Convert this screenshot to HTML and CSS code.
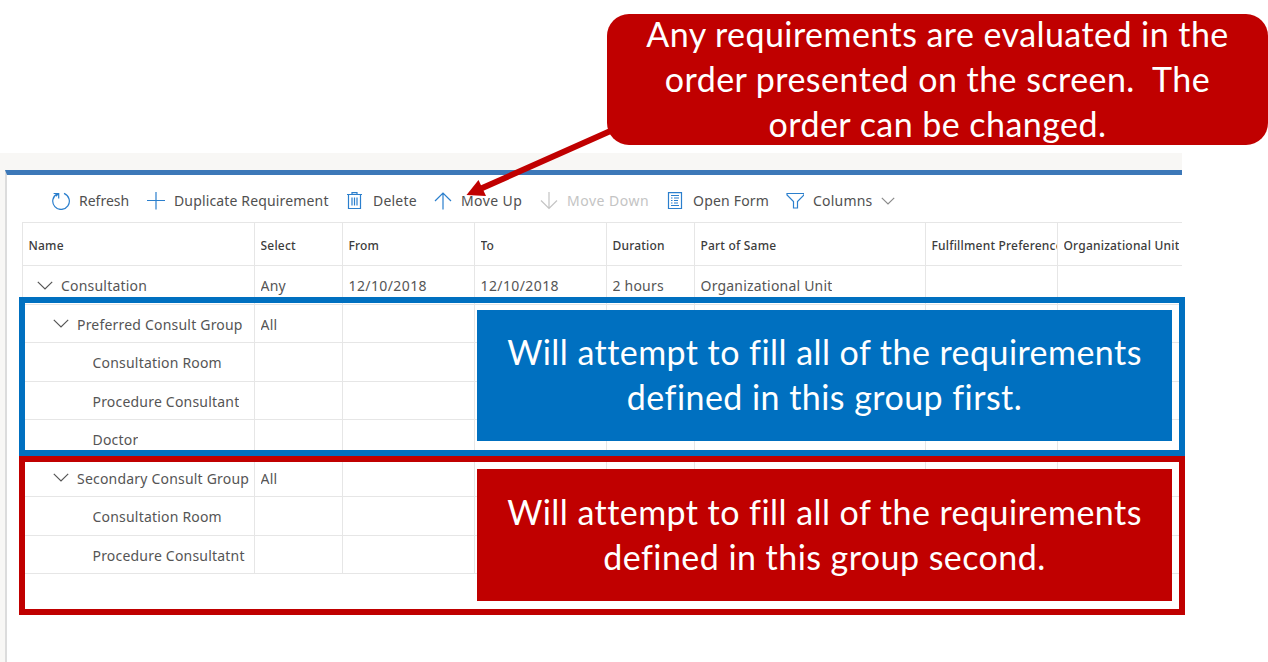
FILE: index.html
```
<!DOCTYPE html>
<html lang="en">
<head>
<meta charset="utf-8">
<title>Requirements</title>
<link rel="stylesheet" href="styles.css">
</head>
<body>
<div class="app">
  <main class="panel">
    <div class="toolbar">
      <div class="cmd cmd-refresh">
        <svg class="icon" viewBox="0 0 18 18"><path d="M12 1.4A8.3 8.3 0 1 1 5.2 1.8M1.6 1.5H6.7V6.4M6.7 1.5L3.8 4.2"/></svg>
        <span>Refresh</span>
      </div>
      <div class="cmd cmd-duplicate">
        <svg class="icon" viewBox="0 0 18 18"><path d="M0 8.500H18M9 0V17.500"/></svg>
        <span>Duplicate Requirement</span>
      </div>
      <div class="cmd cmd-delete">
        <svg class="icon" viewBox="0 0 18 18"><path d="M1 2.500H16M6 2.500V.6H11V2.500M2.500 2.500V16.500H14.500V2.500M6 5.500V13.500M8.500 5.500V13.500M11 5.500V13.500"/></svg>
        <span>Delete</span>
      </div>
      <div class="cmd cmd-up">
        <svg class="icon" viewBox="0 0 18 18"><path d="M9 17.500V1M1 9L9 1L17 9"/></svg>
        <span>Move Up</span>
      </div>
      <div class="cmd cmd-down disabled">
        <svg class="icon" viewBox="0 0 18 18"><path d="M9 0V16.500M1 8.500L9 16.500L17 8.500"/></svg>
        <span>Move Down</span>
      </div>
      <div class="cmd cmd-form">
        <svg class="icon" viewBox="0 0 18 18"><path d="M2.500 .6H15.500V16.500H2.500ZM5 3.500H13M5 6H6.500M8 6H13M5 8.500H6.500M8 8.500H12M5 11H6.500M8 11H12M5 13.500H13"/></svg>
        <span>Open Form</span>
      </div>
      <div class="cmd">
        <svg class="icon" viewBox="0 0 18 18"><path d="M1 1.500H18V3L11.500 9.500V16H7.500V9.500L1 3Z"/></svg>
        <span>Columns</span>
        <svg class="caret" viewBox="0 0 14 8"><path d="M.8 .8L7 7L13.200 .8"/></svg>
      </div>
    </div>

    <div class="grid">
      <div class="row head">
        <div><span>Name</span></div><div><span>Select</span></div><div><span>From</span></div><div><span>To</span></div><div><span>Duration</span></div><div><span>Part of Same</span></div><div><span>Fulfillment Preference</span></div><div><span>Organizational Unit</span></div>
      </div>
      <div class="row">
        <div class="level1"><svg class="chevron" viewBox="0 0 16 9"><path d="M.8 .8L8 8L15.200 .8"/></svg><span>Consultation</span></div><div><span>Any</span></div><div><span class="date">12/10/2018</span></div><div><span class="date">12/10/2018</span></div><div><span>2 hours</span></div><div><span>Organizational Unit</span></div><div></div><div></div>
      </div>
      <div class="row">
        <div class="level2"><svg class="chevron" viewBox="0 0 16 9"><path d="M.8 .8L8 8L15.200 .8"/></svg><span>Preferred Consult Group</span></div><div><span>All</span></div><div></div><div></div><div></div><div></div><div></div><div></div>
      </div>
      <div class="row">
        <div class="level3"><span>Consultation Room</span></div><div></div><div></div><div></div><div></div><div></div><div></div><div></div>
      </div>
      <div class="row">
        <div class="level3"><span>Procedure Consultant</span></div><div></div><div></div><div></div><div></div><div></div><div></div><div></div>
      </div>
      <div class="row">
        <div class="level3"><span>Doctor</span></div><div></div><div></div><div></div><div></div><div></div><div></div><div></div>
      </div>
      <div class="row">
        <div class="level2"><svg class="chevron" viewBox="0 0 16 9"><path d="M.8 .8L8 8L15.200 .8"/></svg><span>Secondary Consult Group</span></div><div><span>All</span></div><div></div><div></div><div></div><div></div><div></div><div></div>
      </div>
      <div class="row">
        <div class="level3"><span>Consultation Room</span></div><div></div><div></div><div></div><div></div><div></div><div></div><div></div>
      </div>
      <div class="row">
        <div class="level3"><span>Procedure Consultatnt</span></div><div></div><div></div><div></div><div></div><div></div><div></div><div></div>
      </div>
    </div>
  </main>
</div>

<div class="frame frame-first"></div>
<div class="frame frame-second"></div>
<div class="note note-first">Will attempt to fill all of the requirements<br>defined in this group first.</div>
<div class="note note-second">Will attempt to fill all of the requirements<br>defined in this group second.</div>
<svg class="arrow" viewBox="0 0 180 80"><path d="M155 -1L20 59"/><polygon points="6.500,65 18.500,50 26,66"/></svg>
<div class="note callout">Any requirements are evaluated in the<br>order presented on the screen.&nbsp; The<br>order can be changed.</div>
</body>
</html>
```
FILE: styles.css
```
* {
  box-sizing: border-box;
}

body {
  margin: 0;
  height: 662px;
  overflow: hidden;
  position: relative;
  background: #fff;
  color: #555;
  font: 14px/20px "Noto Sans", "Open Sans", sans-serif;
  letter-spacing: .2px;
}

.app {
  width: 1182px;
  height: 509px;
  margin-top: 153px;
  padding: 17px 0 0 5px;
  background: #f8f7f5;
}

.panel {
  height: 492px;
  padding-left: 15px;
  background: #fff;
  border-left: 2px solid #dcdcdc;
  border-top: 5px solid #3c78b8;
}

/* Command bar */
.toolbar {
  display: flex;
  align-items: center;
  height: 47px;
  padding: 4px 0 0 30px;
  color: #505050;
}

.cmd {
  display: flex;
  align-items: center;
  gap: 9px;
  height: 20px;
  flex: none;
  white-space: nowrap;
}

.cmd-refresh { width: 95px; letter-spacing: 0; }
.cmd-duplicate { width: 199px; letter-spacing: .15px; }
.cmd-delete { width: 88px; }
.cmd-up { width: 106px; letter-spacing: .4px; }
.cmd-down { width: 126px; letter-spacing: .5px; }
.cmd-form { width: 120px; }

.icon {
  width: 18px;
  height: 18px;
  flex: none;
}

svg path {
  fill: none;
  stroke: currentColor;
  stroke-width: 1.2;
}

.icon { color: #2b7fcd; }
.disabled { color: #c4c4c4; }
.disabled .icon { color: #c4c4c4; }

.caret {
  width: 14px;
  height: 8px;
  color: #8a8a8a;
}

/* Requirement grid */
.grid {
  border-top: 1px solid #e6e6e6;
}

.row {
  display: grid;
  grid-template-columns: 232px 88px 132px 132px 88px 231px 132px 125px;
  height: 39px;
  border-bottom: 1px solid #e6e6e6;
}

.row:nth-child(odd) { height: 38px; }

.row > div {
  display: flex;
  align-items: center;
  min-width: 0;
  padding: 2px 5px 0 5.5px;
  border-left: 1px solid #e6e6e6;
}

.row span {
  overflow: hidden;
  white-space: nowrap;
}

.row.head {
  height: 43px;
  color: #3c3c3c;
  font-size: 12px;
  font-weight: 500;
}

.row.head > div {
  padding-top: 3px;
  padding-right: 0;
}

.date { letter-spacing: .4px; }

.row > .level1 { padding-left: 14px; }
.row > .level2 { padding-left: 30px; }
.row > .level3 { padding-left: 69.5px; }

.chevron {
  width: 16px;
  height: 9px;
  flex: none;
  margin: -2px 8px 0 0;
}

/* Annotations */
.frame {
  position: absolute;
  left: 19px;
  width: 1166px;
  height: 159px;
  border: 6px solid;
}

.frame-first { top: 297px; border-color: #0070c0; }
.frame-second { top: 456px; border-color: #c00000; }

.note {
  position: absolute;
  display: flex;
  align-items: center;
  justify-content: center;
  padding-bottom: 2px;
  color: #fff;
  background: #c00000;
  text-align: center;
  white-space: nowrap;
  font: 34px/45px Lato, sans-serif;
  letter-spacing: .45px;
}

.note-first {
  left: 477px;
  top: 310px;
  width: 695px;
  height: 131px;
  padding-bottom: 4px;
  background: #0070c0;
}

.note-second {
  left: 477px;
  top: 469px;
  width: 695px;
  height: 132px;
}

.callout {
  left: 607px;
  top: 14px;
  width: 661px;
  height: 131px;
  border-radius: 22px;
}

.arrow {
  position: absolute;
  left: 460px;
  top: 130px;
  width: 180px;
  height: 80px;
  overflow: visible;
}

.arrow path {
  stroke: #c00000;
  stroke-width: 6;
}

.arrow polygon { fill: #c00000; }
```
